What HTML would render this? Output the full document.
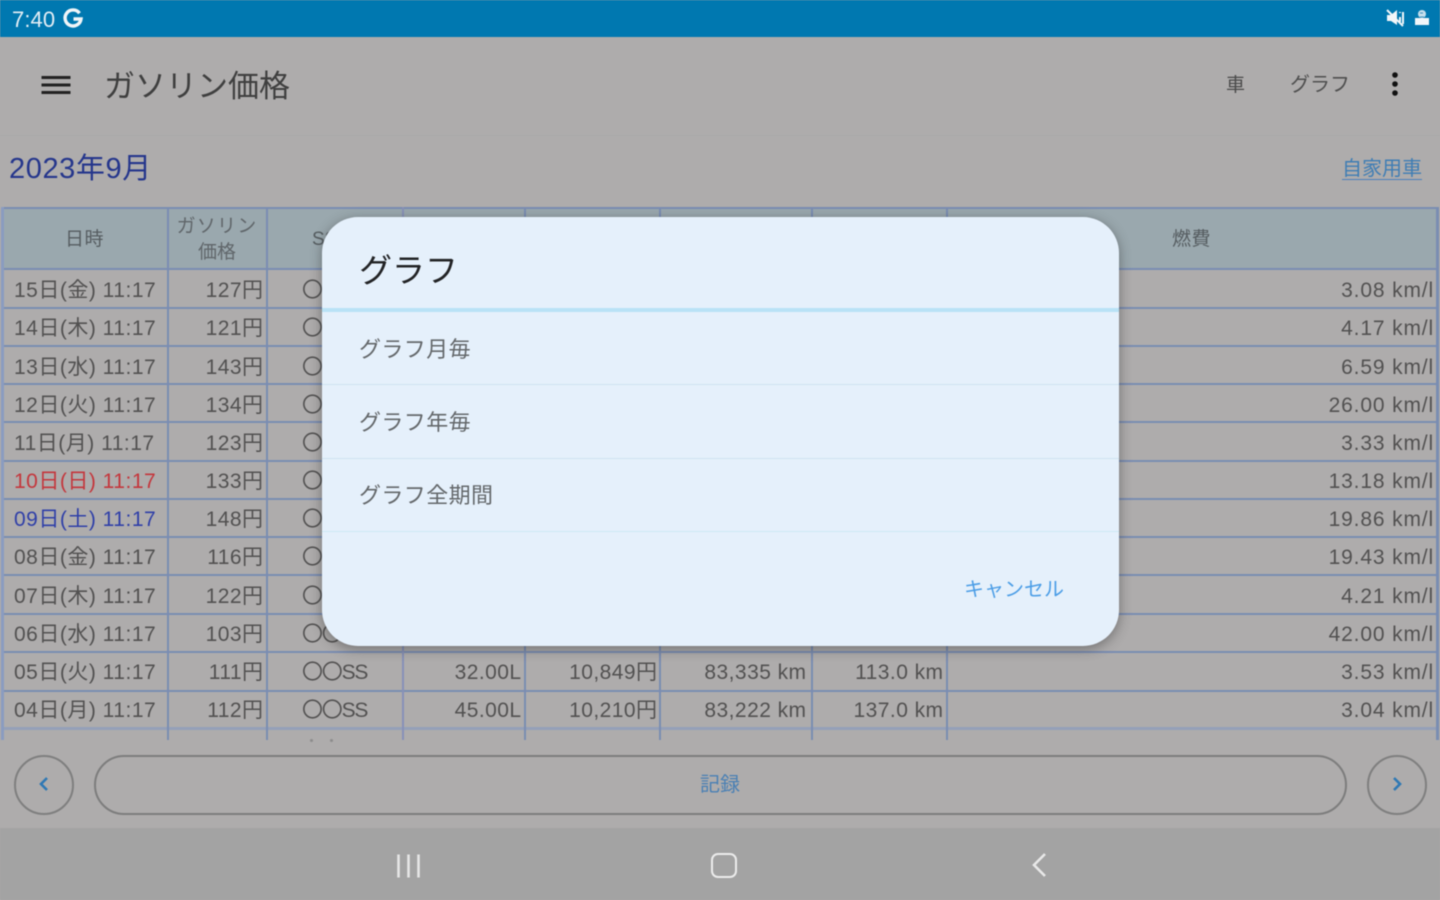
<!DOCTYPE html>
<html lang="ja">
<head>
<meta charset="utf-8">
<title>ガソリン価格</title>
<style>
html,body{margin:0;padding:0;width:1440px;height:900px;overflow:hidden;background:#aeacac}
body,div,span{font-family:"Liberation Sans","Noto Sans CJK JP",sans-serif}
#p{position:relative;width:1440px;height:900px;overflow:hidden;background:#aeacac;filter:blur(.55px)}
#p div,#p svg{position:absolute}
.t{white-space:nowrap;line-height:1}
.r{left:0;width:1440px;height:38px;font-size:21px;color:#525151;letter-spacing:.45px}
.r span{position:absolute;top:9px;line-height:24px;white-space:nowrap}
.a{left:14px;width:150px;letter-spacing:.5px}
.b{right:1176.500px}
.c{left:302px;letter-spacing:-1.200px}
.d{right:918.500px}
.e{right:782.500px}
.f{right:633.500px}
.g{right:496.500px}
.r .h{right:6px;letter-spacing:.85px}
.v{top:207px;height:533px;width:2px;background:#7a8db2}
.l{left:2px;width:1436px;height:2px;background:#7a8db2}
.hd{top:0;font-size:19px;color:#565d61;text-align:center}
.di{left:0;width:797px;height:1px;background:#cfe3f0}
.m{left:37px;font-size:22px;color:#64686b;letter-spacing:.4px}
</style>
</head>
<body>
<div id="p">
  <div style="left:0;top:0;width:1440px;height:37px;background:#0078b0"></div>
  <div class="t" style="left:12px;top:9px;font-size:22px;color:#e4eef5;letter-spacing:.1px">7:40</div>
  <svg style="left:62px;top:8px" width="22" height="22" viewBox="0 0 22 22"><path d="M17.5 5.2A8 8 0 1 0 19 11H11.5" fill="none" stroke="#f0f5f8" stroke-width="3.4"/></svg>
  <svg style="left:1386px;top:8px" width="22" height="20" viewBox="0 0 22 20"><path d="M1 7h4l6-5v15l-6-4H1z" fill="#f2f6f9"/><path d="M1 2l16 16" stroke="#f2f6f9" stroke-width="2"/><path d="M14 4v1M17 4v12M14 9v5" stroke="#f2f6f9" stroke-width="2" fill="none"/></svg>
  <svg style="left:1414px;top:7px" width="16" height="20" viewBox="0 0 16 20"><path d="M1 11h14v7H1z" fill="#f2f6f9"/><circle cx="8" cy="7" r="4" fill="#c6dfec"/><path d="M6 6l3 0M6 10h4" stroke="#3b8fbc" stroke-width="1"/></svg>

  <svg style="left:40px;top:75px" width="32" height="20" viewBox="0 0 32 20"><path d="M1.500 2.500H30.500M1.500 10H30.500M1.500 17.500H30.500" stroke="#222" stroke-width="3"/></svg>
  <div class="t" style="left:104px;top:71px;font-size:31px;color:#3f3f3f">ガソリン価格</div>
  <div class="t" style="left:1226px;top:76px;font-size:19px;color:#4a4a4a">車</div>
  <div class="t" style="left:1290px;top:75px;font-size:20px;color:#4f4f4f">グラフ</div>
  <svg style="left:1389px;top:71px" width="12" height="26" viewBox="0 0 12 26"><circle cx="6" cy="4" r="2.800" fill="#111"/><circle cx="6" cy="13" r="2.800" fill="#111"/><circle cx="6" cy="22" r="2.800" fill="#111"/></svg>

  <div style="left:0;top:135px;width:1440px;height:1px;background:#a9a8a8"></div>
  <div class="t" style="left:9px;top:155px;font-size:29px;color:#25368c;letter-spacing:.6px">2023年9月</div>
  <div class="t" style="left:1342px;top:159px;font-size:20px;color:#3f7db4;border-bottom:1px solid #4a80bb;padding-bottom:0">自家用車</div>

  <div style="left:2px;top:207px;width:1436px;height:62px;background:#9aa8ae"></div>

  <div class="l" style="top:207px"></div>
  <div class="l" style="top:268px"></div>
  <div class="l" style="top:307px"></div>
  <div class="l" style="top:345px"></div>
  <div class="l" style="top:383px"></div>
  <div class="l" style="top:421px"></div>
  <div class="l" style="top:460px"></div>
  <div class="l" style="top:498px"></div>
  <div class="l" style="top:536px"></div>
  <div class="l" style="top:574px"></div>
  <div class="l" style="top:613px"></div>
  <div class="l" style="top:651px"></div>
  <div class="l" style="top:690px"></div>
  <div class="l" style="top:727px;height:3px;background:#94a0b8"></div>

  <div class="v" style="left:1px;width:3px;background:#8a9cc0"></div>
  <div class="v" style="left:167px"></div>
  <div class="v" style="left:266px"></div>
  <div class="v" style="left:402px;background:#8791b8"></div>
  <div class="v" style="left:524px"></div>
  <div class="v" style="left:659px"></div>
  <div class="v" style="left:811px"></div>
  <div class="v" style="left:946px"></div>
  <div style="left:1436px;top:207px;width:3px;height:533px;background:#7a8db2"></div>

  <div style="left:0;top:207px;width:1440px;height:62px">
    <div class="t hd" style="left:65px;top:23px;letter-spacing:.5px">日時</div>
    <div class="t hd" style="left:175px;top:10px;width:84px;color:#60666a;letter-spacing:1.200px">ガソリン</div>
    <div class="t hd" style="left:175px;top:36px;width:84px;color:#60666a">価格</div>
    <div class="t hd" style="left:312px;top:23px">SS名</div>
    <div class="t hd" style="left:1172px;top:23px;letter-spacing:.5px">燃費</div>
  </div>

  <div class="r" style="top:270px"><span class="a">15日(金) 11:17</span><span class="b">127円</span><span class="c">〇〇SS</span><span class="h">3.08 km/l</span></div>
  <div class="r" style="top:308px"><span class="a">14日(木) 11:17</span><span class="b">121円</span><span class="c">〇〇SS</span><span class="h">4.17 km/l</span></div>
  <div class="r" style="top:347px"><span class="a">13日(水) 11:17</span><span class="b">143円</span><span class="c">〇〇SS</span><span class="h">6.59 km/l</span></div>
  <div class="r" style="top:385px"><span class="a">12日(火) 11:17</span><span class="b">134円</span><span class="c">〇〇SS</span><span class="h">26.00 km/l</span></div>
  <div class="r" style="top:423px"><span class="a">11日(月) 11:17</span><span class="b">123円</span><span class="c">〇〇SS</span><span class="h">3.33 km/l</span></div>
  <div class="r" style="top:461px"><span class="a" style="color:#c4363c">10日(日) 11:17</span><span class="b">133円</span><span class="c">〇〇SS</span><span class="h">13.18 km/l</span></div>
  <div class="r" style="top:499px"><span class="a" style="color:#2f3fa8">09日(土) 11:17</span><span class="b">148円</span><span class="c">〇〇SS</span><span class="h">19.86 km/l</span></div>
  <div class="r" style="top:537px"><span class="a">08日(金) 11:17</span><span class="b">116円</span><span class="c">〇〇SS</span><span class="h">19.43 km/l</span></div>
  <div class="r" style="top:576px"><span class="a">07日(木) 11:17</span><span class="b">122円</span><span class="c">〇〇SS</span><span class="h">4.21 km/l</span></div>
  <div class="r" style="top:614px"><span class="a">06日(水) 11:17</span><span class="b">103円</span><span class="c">〇〇SS</span><span class="h">42.00 km/l</span></div>
  <div class="r" style="top:652px"><span class="a">05日(火) 11:17</span><span class="b">111円</span><span class="c">〇〇SS</span><span class="d">32.00L</span><span class="e">10,849円</span><span class="f">83,335 km</span><span class="g">113.0 km</span><span class="h">3.53 km/l</span></div>
  <div class="r" style="top:690px"><span class="a">04日(月) 11:17</span><span class="b">112円</span><span class="c">〇〇SS</span><span class="d">45.00L</span><span class="e">10,210円</span><span class="f">83,222 km</span><span class="g">137.0 km</span><span class="h">3.04 km/l</span></div>

  <div style="left:0;top:740px;width:1440px;height:88px;background:#aeacac"></div>
  <div style="left:310px;top:739px;width:3px;height:3px;background:#8c8c8c;border-radius:2px"></div>
  <div style="left:330px;top:739px;width:3px;height:3px;background:#8c8c8c;border-radius:2px"></div>

  <div style="left:14px;top:755px;width:56px;height:56px;border:2px solid #7f7f7f;border-radius:50%"></div>
  <svg style="left:37px;top:775px" width="14" height="18" viewBox="0 0 14 18"><path d="M10 3L4 9l6 6" fill="none" stroke="#2f78b4" stroke-width="2.600"/></svg>
  <div style="left:94px;top:755px;width:1249px;height:56px;border:2px solid #7d7d7d;border-radius:30px"></div>
  <div class="t" style="left:700px;top:775px;font-size:20px;color:#4a80b4">記録</div>
  <div style="left:1367px;top:755px;width:56px;height:56px;border:2px solid #7f7f7f;border-radius:50%"></div>
  <svg style="left:1390px;top:775px" width="14" height="18" viewBox="0 0 14 18"><path d="M4 3l6 6-6 6" fill="none" stroke="#2f78b4" stroke-width="2.600"/></svg>

  <div style="left:0;top:828px;width:1440px;height:72px;background:#a3a3a3"></div>
  <svg style="left:395px;top:852px" width="28" height="28" viewBox="0 0 28 28"><path d="M3.500 2.500V25.500M13.500 2.500V25.500M23.500 2.500V25.500" stroke="#e6e6e6" stroke-width="2.600"/></svg>
  <div style="left:711px;top:853px;width:22px;height:21px;border:2.500px solid #ececec;border-radius:7px"></div>
  <svg style="left:1028px;top:851px" width="22" height="28" viewBox="0 0 22 28"><path d="M17 3L6 14l11 11" fill="none" stroke="#e8e8e8" stroke-width="2.600"/></svg>

  <div style="left:322px;top:217px;width:797px;height:429px;background:#e5f0fb;border-radius:36px;box-shadow:0 3px 12px rgba(40,40,40,.45);overflow:hidden">
    <div class="t" style="left:37px;top:37px;font-size:33px;color:#222325">グラフ</div>
    <div style="left:0;top:91px;width:797px;height:4px;background:#b9e2f6"></div>
    <div class="t m" style="top:122px">グラフ月毎</div>
    <div class="di" style="top:167px"></div>
    <div class="t m" style="top:195px">グラフ年毎</div>
    <div class="di" style="top:241px"></div>
    <div class="t m" style="top:268px">グラフ全期間</div>
    <div class="di" style="top:314px;background:#cdeaf5"></div>
    <div class="t" style="left:642px;top:363px;font-size:20px;color:#4b9de6">キャンセル</div>
  </div>
</div>
</body>
</html>
